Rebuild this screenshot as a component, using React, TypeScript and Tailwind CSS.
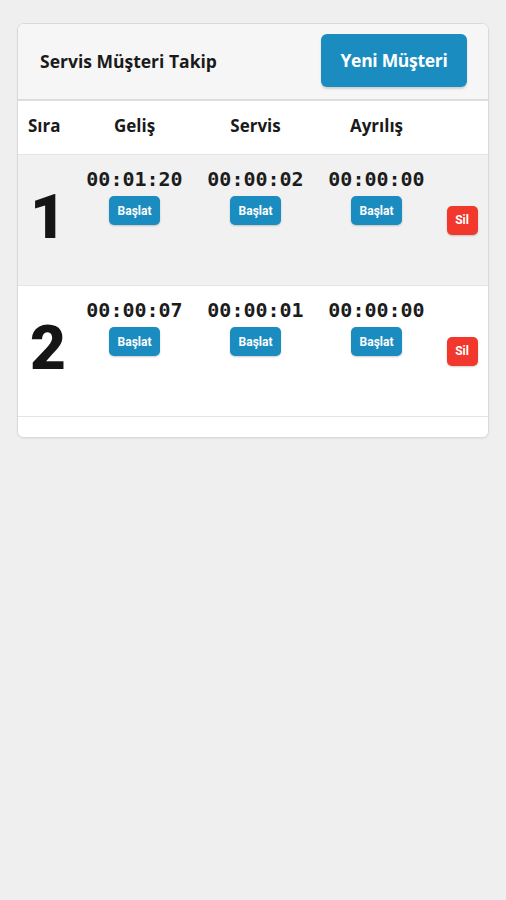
import React from "react";

const rows = [
  { n: "1", times: ["00:01:20", "00:00:02", "00:00:00"], bg: "bg-[#f1f1f1]" },
  { n: "2", times: ["00:00:07", "00:00:01", "00:00:00"], bg: "bg-white" },
];

export default function App() {
  return (
    <div className="min-h-[900px] w-full bg-[#efefef] pt-[23px] px-[17px]" style={{ fontFamily: "'Open Sans', Roboto, sans-serif" }}>
      <div className="w-[472px] overflow-hidden rounded-[7px] border border-[#dadada] bg-white shadow-[0_1px_2px_rgba(0,0,0,0.06)]">
        <div className="flex h-[77px] items-center justify-between border-b-2 border-[#dddddd] bg-[#f6f6f6] pl-[22px] pr-[21px]">
          <span className="text-[17.5px] font-bold text-[#1a1a1a]">Servis Müşteri Takip</span>
          <button className="mt-[-2px] h-[53px] w-[146px] rounded-[6px] bg-[#1a8cc0] text-[17.5px] font-bold tracking-[-0.3px] text-white shadow-[0_2px_2px_rgba(0,0,0,0.15)]">
            Yeni Müşteri
          </button>
        </div>
        <div className="flex h-[53px] items-center bg-white pb-[4px] text-[17px] font-bold text-[#1a1a1a]">
          <div className="w-[56px] pl-[10px]">Sıra</div>
          <div className="w-[121px] text-center">Geliş</div>
          <div className="w-[121px] text-center">Servis</div>
          <div className="w-[121px] text-center">Ayrılış</div>
        </div>
        {rows.map((r, i) => (
          <div key={i} className={`flex h-[131px] border-t border-[#e4e4e4] ${r.bg}`}>
            <div className="flex w-[56px] items-center justify-center pl-[4px] pb-[6px] text-[62px] font-black leading-none text-[#151515]" style={{ fontFamily: "Roboto, sans-serif" }}>
              {r.n}
            </div>
            {r.times.map((t, j) => (
              <div key={j} className="flex w-[121px] flex-col items-center pt-[12px]">
                <div className="text-[20px] font-bold leading-[24px] text-[#1c1c1c]" style={{ fontFamily: "'DejaVu Sans Mono', monospace" }}>
                  {t}
                </div>
                <button className="mt-[5px] h-[29px] w-[51px] rounded-[5px] bg-[#1a8cc0] text-[12px] font-bold text-white shadow-[0_1px_2px_rgba(0,0,0,0.2)]" style={{ fontFamily: "Roboto, sans-serif" }}>
                  Başlat
                </button>
              </div>
            ))}
            <div className="flex flex-1 items-center justify-center pr-[1px]">
              <button className="h-[29px] w-[31px] rounded-[5px] bg-[#f2382c] text-[12px] font-bold text-white shadow-[0_1px_2px_rgba(0,0,0,0.2)]" style={{ fontFamily: "Roboto, sans-serif" }}>
                Sil
              </button>
            </div>
          </div>
        ))}
        <div className="h-[21px] border-t border-[#e4e4e4] bg-white" />
      </div>
    </div>
  );
}
